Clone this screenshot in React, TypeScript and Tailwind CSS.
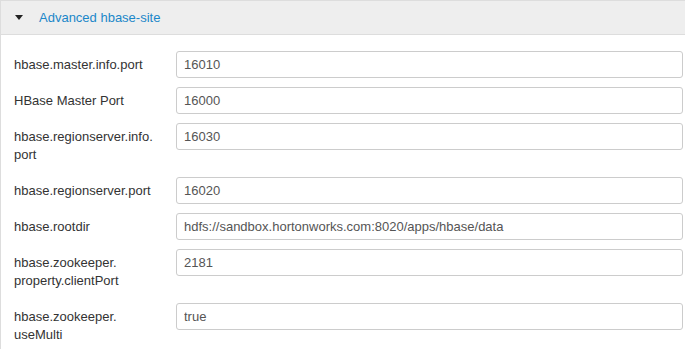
import { useState } from "react";

interface Prop {
  label: string;
  value: string;
}

const props: Prop[] = [
  { label: "hbase.master.info.port", value: "16010" },
  { label: "HBase Master Port", value: "16000" },
  { label: "hbase.regionserver.info.port", value: "16030" },
  { label: "hbase.regionserver.port", value: "16020" },
  { label: "hbase.rootdir", value: "hdfs://sandbox.hortonworks.com:8020/apps/hbase/data" },
  { label: "hbase.zookeeper.property.clientPort", value: "2181" },
  { label: "hbase.zookeeper.useMulti", value: "true" },
];

function Row({ label, value }: Prop) {
  const [val, setVal] = useState(value);
  return (
    <div className="flex items-start mb-2">
      <label className="w-[147px] shrink-0 pt-[5px] pb-[5px] leading-[18px] text-[13px] text-[#333] break-words">
        {label.replace(/\./g, ".\u200b")}
      </label>
      <input
        className="ml-[15px] flex-1 min-w-0 h-[27px] px-[7px] border border-[#ccc] rounded-[3px] text-[13px] text-[#555] bg-white outline-none"
        value={val}
        onChange={(e) => setVal(e.target.value)}
      />
    </div>
  );
}

export default function App() {
  return (
    <div className="w-[685px] h-[351px] overflow-hidden bg-white font-['Liberation_Sans',Arial,sans-serif]">
      <div className="border-l border-t border-[#ddd]">
        <div className="h-[34px] flex items-center bg-[#eeeeee] border-b border-[#dddddd]">
          <svg width="8" height="5" viewBox="0 0 8 5" className="ml-[14px] mb-[1px]">
            <path d="M0 0 H8 L4 5 Z" fill="#222" />
          </svg>
          <span className="ml-[16px] text-[13px] text-[#1b87c9]">Advanced hbase-site</span>
        </div>
        <div className="pt-[16px] pl-[13px] pr-[2px]">
          {props.map((p) => (
            <Row key={p.label} {...p} />
          ))}
        </div>
      </div>
    </div>
  );
}
